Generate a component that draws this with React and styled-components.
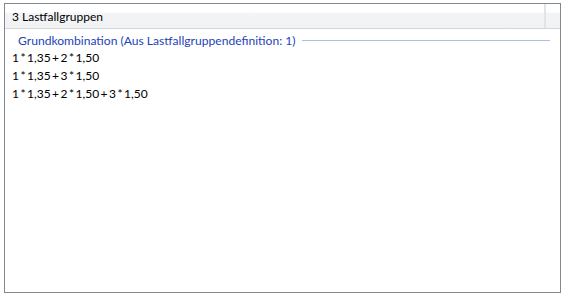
import React from 'react'
import styled, { createGlobalStyle } from 'styled-components'

const GlobalStyle = createGlobalStyle`
  body {
    margin: 0;
    background: #ffffff;
    font-family: Lato, 'Liberation Sans', sans-serif;
  }
`

const Frame = styled.div`
  box-sizing: border-box;
  margin: 3px 0 0 4px;
  width: 557px;
  height: 290px;
  border: 1px solid #828790;
  background: #ffffff;
  display: flex;
  flex-direction: column;
`

const HeaderBar = styled.div`
  display: flex;
  height: 24px;
  border-bottom: 1px solid #d5d5d5;
  background: linear-gradient(to bottom, #ffffff 0%, #ffffff 35%, #f3f4f6 36%, #f1f2f4 100%);
`

const HeaderCell = styled.div`
  flex: ${(p) => (p.$fill ? 1 : '0 0 14px')};
  display: flex;
  align-items: center;
  padding-left: ${(p) => (p.$fill ? '7px' : '0')};
  border-right: ${(p) => (p.$fill ? '2px solid #e3e4e6' : 'none')};
  font-size: 12px;
  color: #000000;
`

const Body = styled.div`
  padding: 2px 10px 0 7px;
`

const GroupHeader = styled.div`
  display: flex;
  align-items: center;
  height: 18px;
  padding-left: 6px;
  gap: 6px;
  font-size: 12.1px;
  color: #2343b8;
`

const GroupLine = styled.div`
  flex: 1;
  height: 1px;
  background: #aebfe6;
`

const Row = styled.div`
  height: 18px;
  line-height: 18px;
  font-size: 12px;
  color: #000000;
  white-space: nowrap;
  word-spacing: -1.6px;
  &:first-of-type {
    margin-top: 1px;
  }
`

const rows = [
  '1 * 1,35 + 2 * 1,50',
  '1 * 1,35 + 3 * 1,50',
  '1 * 1,35 + 2 * 1,50 + 3 * 1,50',
]

const App = () => {
  return (
    <>
      <GlobalStyle />
      <Frame>
        <HeaderBar>
          <HeaderCell $fill>3 Lastfallgruppen</HeaderCell>
          <HeaderCell />
        </HeaderBar>
        <Body>
          <GroupHeader>
            <span>Grundkombination (Aus Lastfallgruppendefinition: 1)</span>
            <GroupLine />
          </GroupHeader>
          {rows.map((r) => (
            <Row key={r}>{r}</Row>
          ))}
        </Body>
      </Frame>
    </>
  )
}

export default App
